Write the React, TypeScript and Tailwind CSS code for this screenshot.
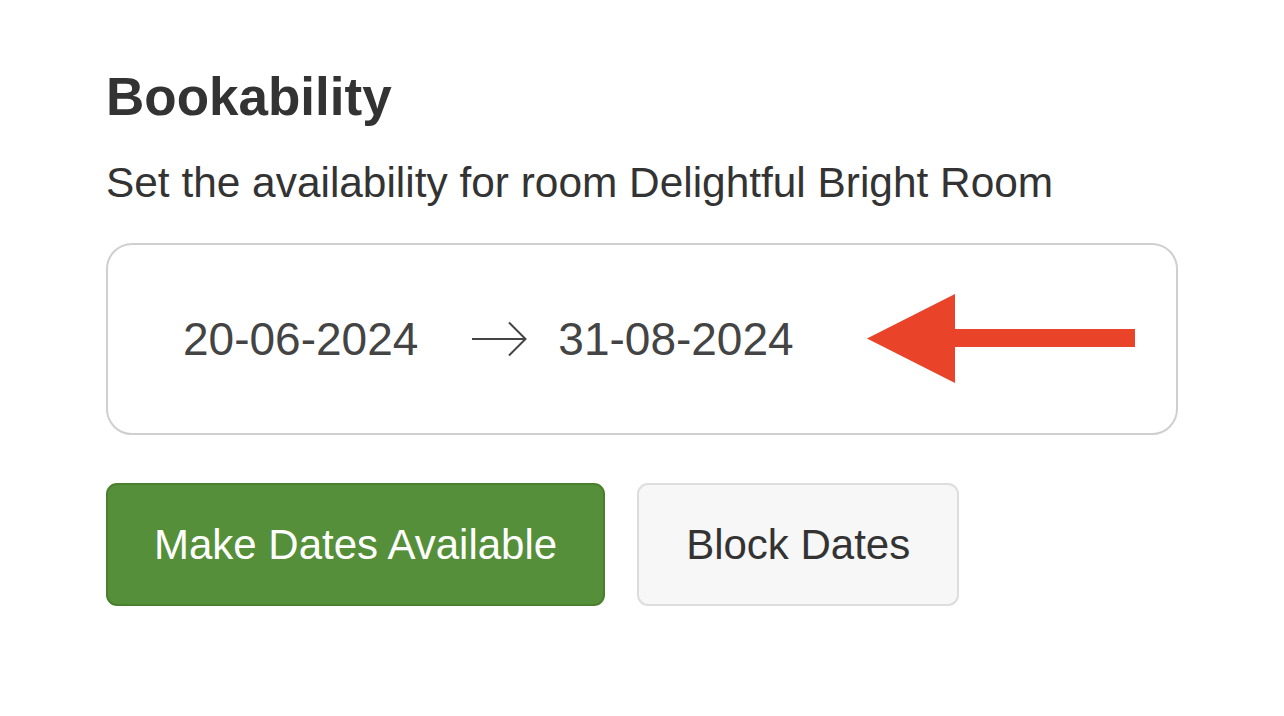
const FONT = "font-['Liberation_Sans','Helvetica',Arial,sans-serif]";

function ThinArrow() {
  return (
    <svg width="56" height="36" viewBox="0 0 56 36" fill="none" className="block">
      <line x1="1" y1="18" x2="54" y2="18" stroke="#444" strokeWidth="2" />
      <polyline points="38,1.5 54.5,18 38,34.5" stroke="#444" strokeWidth="2" fill="none" />
    </svg>
  );
}

function RedArrow() {
  return (
    <svg width="268" height="90" viewBox="0 0 268 90" className="block">
      <polygon points="0,44.5 88,0 88,89" fill="#E9432A" />
      <rect x="87" y="35" width="181" height="18" fill="#E9432A" />
    </svg>
  );
}

export default function App() {
  return (
    <div className={`min-h-screen bg-white pl-[106px] pt-[70px] pr-[106px] ${FONT}`}>
      <h1 className="text-[53px] leading-none font-bold text-[#333]">Bookability</h1>
      <p className="mt-[39px] text-[42.4px] leading-none text-[#333]">
        Set the availability for room Delightful Bright Room
      </p>

      {/* date range */}
      <div className="mt-[39px] w-[1072px] h-[192px] border-2 border-[#cfcfcf] rounded-[26px] flex items-center pl-[75px]">
        <span className="text-[46px] leading-none text-[#444]">20-06-2024</span>
        <span className="ml-[53px] mr-[31px]">
          <ThinArrow />
        </span>
        <span className="text-[46px] leading-none text-[#444]">31-08-2024</span>
        <span className="ml-[73px]">
          <RedArrow />
        </span>
      </div>

      <div className="mt-[48px] flex gap-[32px]">
        <button className="h-[123px] px-[46px] bg-[#568F39] border-2 border-[#4A7F2E] rounded-[11px] text-white text-[42px] leading-none">
          Make Dates Available
        </button>
        <button className="h-[123px] px-[47px] bg-[#f7f7f7] border-2 border-[#dddddd] rounded-[11px] text-[#333] text-[42px] leading-none">
          Block Dates
        </button>
      </div>
    </div>
  );
}
